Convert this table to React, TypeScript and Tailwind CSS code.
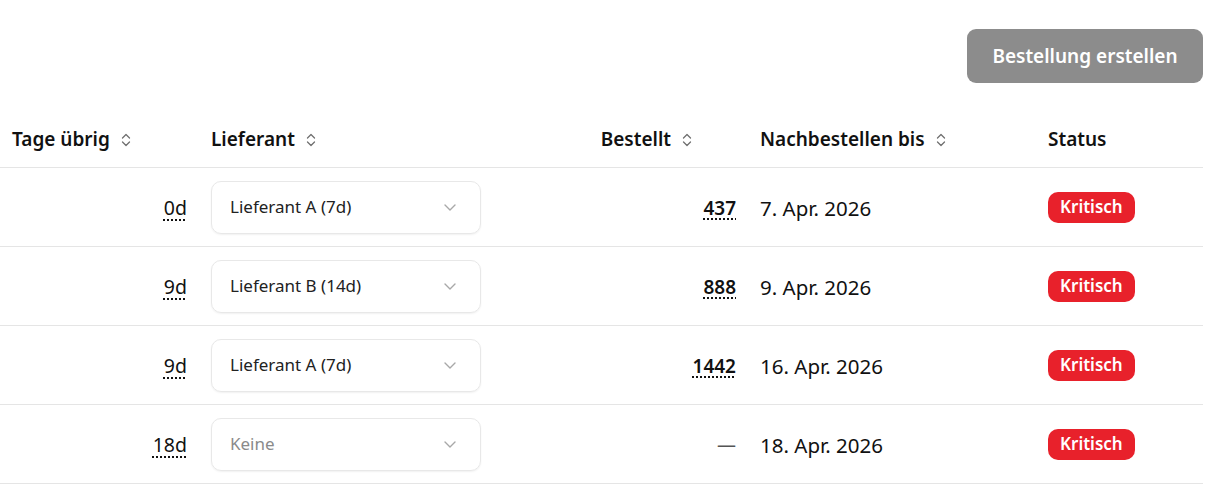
import React from 'react'

const rows = [
  { days: '0d', supplier: 'Lieferant A (7d)', ordered: '437', until: '7. Apr. 2026' },
  { days: '9d', supplier: 'Lieferant B (14d)', ordered: '888', until: '9. Apr. 2026' },
  { days: '9d', supplier: 'Lieferant A (7d)', ordered: '1442', until: '16. Apr. 2026' },
  { days: '18d', supplier: '', ordered: '', until: '18. Apr. 2026' },
]

function SortIcon() {
  return (
    <svg width="12" height="16" viewBox="0 0 12 16" fill="none" stroke="#707070" strokeWidth="1.3" strokeLinecap="round" strokeLinejoin="round" className="ml-2.5">
      <path d="M2.5 6 L6 2.5 L9.5 6" />
      <path d="M2.5 10 L6 13.5 L9.5 10" />
    </svg>
  )
}

function Chevron() {
  return (
    <svg width="16" height="16" viewBox="0 0 16 16" fill="none" stroke="#a8a8a8" strokeWidth="1.4" strokeLinecap="round" strokeLinejoin="round">
      <path d="M3 6 L8 11 L13 6" />
    </svg>
  )
}

const grid = 'grid grid-cols-[199px_300px_249px_288px_167px]'

export default function App() {
  return (
    <div className="w-[1227px] h-[491px] bg-white text-[#111] font-['Noto_Sans','Open_Sans',sans-serif] overflow-hidden">
      <div className="w-[1203px]">
        <div className="flex justify-end pt-[29px]">
          <button className="h-[54px] w-[236px] rounded-[9px] bg-[#8c8c8c] text-white text-[19px] font-semibold">
            Bestellung erstellen
          </button>
        </div>

        <div className={`${grid} h-[58px] mt-[27px] items-center border-b border-[#e5e5e5] text-[19px] font-semibold`}>
          <div className="px-3 flex items-center pt-[2px]">Tage übrig<SortIcon /></div>
          <div className="px-3 flex items-center pt-[2px]">Lieferant<SortIcon /></div>
          <div className="px-3 pr-[55px] flex items-center justify-end pt-[2px]">Bestellt<SortIcon /></div>
          <div className="px-3 flex items-center pt-[2px]">Nachbestellen bis<SortIcon /></div>
          <div className="px-3 pt-[2px]">Status</div>
        </div>

        {rows.map((r, i) => (
          <div key={i} className={`${grid} h-[79px] items-center border-b border-[#e5e5e5]`}>
            <div className="px-3 text-right text-[19.5px] pt-[2px]">
              <span className="underline decoration-dotted decoration-[1.5px] underline-offset-[4px]">{r.days}</span>
            </div>
            <div className="px-3">
              <div className="w-[270px] h-[53px] rounded-[10px] border border-[#e8e8e8] shadow-[0_1px_2px_rgba(0,0,0,0.06)] flex items-center justify-between pl-[18px] pr-[22px] text-[17px]">
                <span className={r.supplier ? 'text-[#222]' : 'text-[#8a8a8a]'}>{r.supplier || 'Keine'}</span>
                <Chevron />
              </div>
            </div>
            <div className="px-3 text-right text-[19px] pt-[2px]">
              {r.ordered ? (
                <span className="font-semibold underline decoration-dotted decoration-[1.5px] underline-offset-[4px]">{r.ordered}</span>
              ) : (
                <span className="text-[#555]">—</span>
              )}
            </div>
            <div className="px-3 text-[20.5px] pt-[2px]">{r.until}</div>
            <div className="px-3">
              <span className="inline-flex items-center h-[31px] px-[12px] rounded-[10px] bg-[#e8212b] text-white text-[17px] font-semibold">Kritisch</span>
            </div>
          </div>
        ))}
      </div>
    </div>
  )
}
